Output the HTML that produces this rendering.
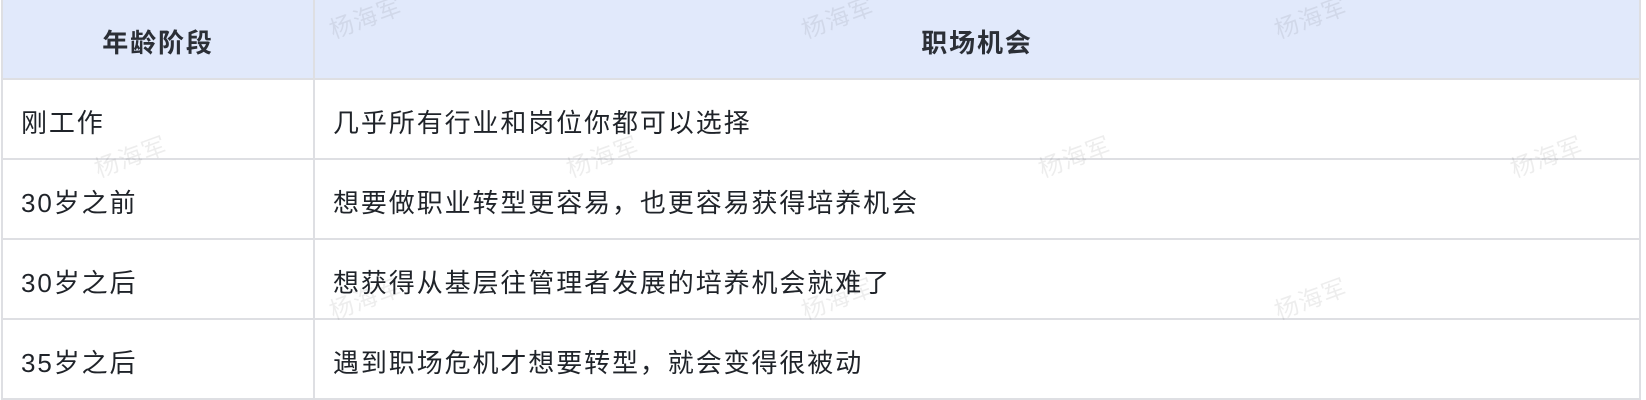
<!DOCTYPE html>
<html><head><meta charset="utf-8"><style>
html,body{margin:0;padding:0;background:#fff;}
body{width:1646px;height:400px;position:relative;overflow:hidden;font-family:"Liberation Sans","Noto Sans CJK SC",sans-serif;color:#1f2329;}
table{position:absolute;left:1px;top:-2px;border-collapse:collapse;width:1640px;table-layout:fixed;}
td,th{border:2px solid #dedfe3;height:76px;padding:0 0 0 18px;font-size:26px;letter-spacing:1.9px;text-align:left;vertical-align:middle;padding-top:4px;box-sizing:border-box;}
th{background:#e1e9fb;font-weight:bold;color:#2b2f36;text-align:center;padding-left:0;height:80px;}
tr:not(:first-child) td{height:80px;}
.wm{position:absolute;font-size:24px;color:rgba(0,0,0,0.07);transform:translate(-50%,-50%) rotate(-20deg);letter-spacing:1px;white-space:nowrap;}
</style></head><body>
<table>
<colgroup><col style="width:312px"><col></colgroup>
<tr><th>年龄阶段</th><th>职场机会</th></tr>
<tr><td>刚工作</td><td>几乎所有行业和岗位你都可以选择</td></tr>
<tr><td>30岁之前</td><td>想要做职业转型更容易，也更容易获得培养机会</td></tr>
<tr><td>30岁之后</td><td>想获得从基层往管理者发展的培养机会就难了</td></tr>
<tr><td>35岁之后</td><td>遇到职场危机才想要转型，就会变得很被动</td></tr>
</table>
<div class="wm" style="left:365px;top:16px">杨海军</div>
<div class="wm" style="left:837px;top:16px">杨海军</div>
<div class="wm" style="left:1310px;top:16px">杨海军</div>
<div class="wm" style="left:130px;top:155px">杨海军</div>
<div class="wm" style="left:602px;top:155px">杨海军</div>
<div class="wm" style="left:1074px;top:155px">杨海军</div>
<div class="wm" style="left:1546px;top:155px">杨海军</div>
<div class="wm" style="left:365px;top:297px">杨海军</div>
<div class="wm" style="left:837px;top:297px">杨海军</div>
<div class="wm" style="left:1310px;top:297px">杨海军</div>
</body></html>
